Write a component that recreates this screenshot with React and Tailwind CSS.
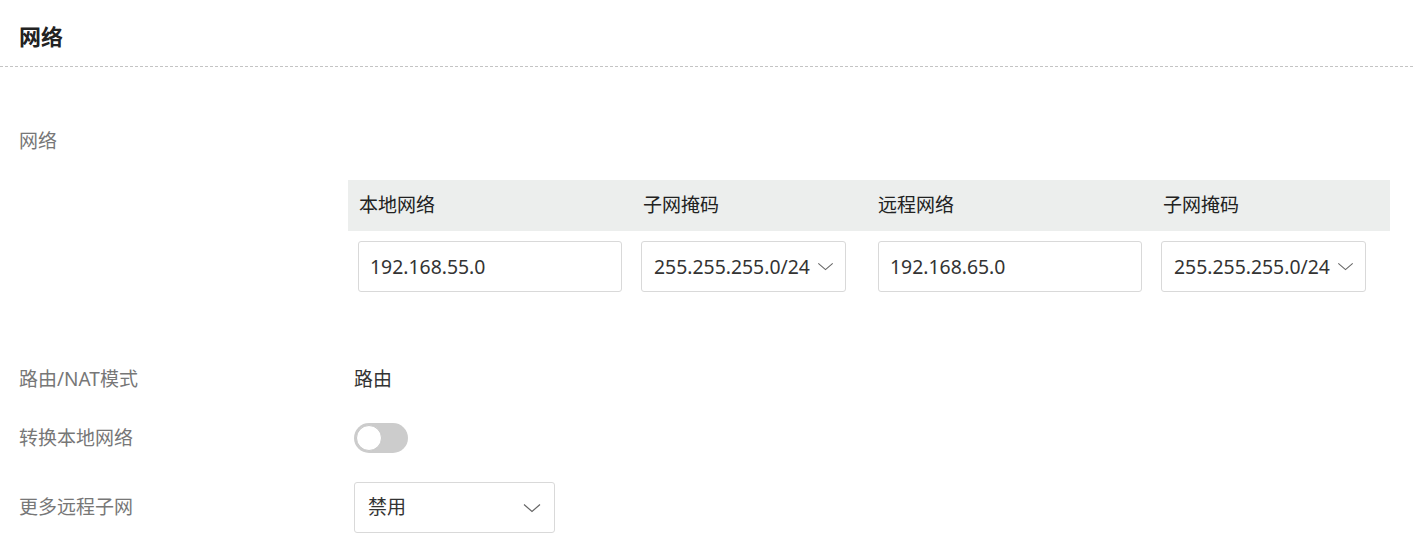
import { useState } from "react";

const font = { fontFamily: '"Noto Sans", "Noto Sans CJK SC", sans-serif' };

function Chevron({ className = "" }) {
  return (
    <svg viewBox="0 0 18 10" className={className} fill="none" stroke="#666" strokeWidth="1.2">
      <path d="M1 1.5 L9 8.5 L17 1.5" />
    </svg>
  );
}

function TextBox({ value, width }) {
  return (
    <div
      className={`flex h-[51px] items-center rounded-[3px] border border-[#d9d9d9] bg-white pl-[11px] text-[19.4px] text-[#333] ${width}`}
    >
      {value}
    </div>
  );
}

function MaskSelect({ value }) {
  return (
    <div className="flex h-[51px] w-[205px] items-center justify-between rounded-[3px] border border-[#d9d9d9] bg-white pl-[12px] pr-[11px] text-[19.4px] text-[#333]">
      <span>{value}</span>
      <Chevron className="h-[9px] w-[17px]" />
    </div>
  );
}

function SettingRow({ label, children, className }) {
  return (
    <div className={`grid grid-cols-[335px_1fr] items-center ${className}`}>
      <div className="text-[19px] text-[#777]">{label}</div>
      <div className="flex items-center">{children}</div>
    </div>
  );
}

export default function App() {
  const [natLocal, setNatLocal] = useState(false);

  return (
    <div className="h-[552px] w-[1413px] overflow-hidden bg-white" style={font}>
      <div className="h-[67px] border-b border-dashed border-[#c4c4c4] pl-[19px] pt-[21px]">
        <h1 className="text-[22px] font-bold leading-[30px] text-[#222]">网络</h1>
      </div>

      <div className="pl-[19px] pr-[23px]">
        <div className="mt-[60px] text-[19px] leading-[28px] text-[#777]">网络</div>

        <div className="ml-[329px] mt-[25px]">
          <div className="grid grid-cols-[283px_237px_283px_1fr] bg-[#eceeed] text-[19px] text-[#222]">
            <div className="flex h-[51px] items-center pl-[11px]">本地网络</div>
            <div className="flex h-[51px] items-center pl-[12px]">子网掩码</div>
            <div className="flex h-[51px] items-center pl-[10px]">远程网络</div>
            <div className="flex h-[51px] items-center pl-[12px]">子网掩码</div>
          </div>
          <div className="grid h-[73px] grid-cols-[283px_237px_283px_1fr] bg-white pt-[10px]">
            <div className="pl-[10px]">
              <TextBox value="192.168.55.0" width="w-[264px]" />
            </div>
            <div className="pl-[10px]">
              <MaskSelect value="255.255.255.0/24" />
            </div>
            <div className="pl-[10px]">
              <TextBox value="192.168.65.0" width="w-[264px]" />
            </div>
            <div className="pl-[10px]">
              <MaskSelect value="255.255.255.0/24" />
            </div>
          </div>
        </div>

        <SettingRow label="路由/NAT模式" className="mt-[51px] h-[48px]">
          <span className="text-[19px] text-[#333]">路由</span>
        </SettingRow>

        <SettingRow label="转换本地网络" className="mt-[11px] h-[48px]">
          <button
            type="button"
            onClick={() => setNatLocal(!natLocal)}
            className={`relative h-[30px] w-[54px] rounded-full transition ${
              natLocal ? "bg-[#3b82f6]" : "bg-[#cccccc]"
            }`}
          >
            <span
              className={`absolute top-[2px] h-[26px] w-[26px] rounded-full border border-[#c8c8c8] bg-white transition ${
                natLocal ? "left-[26px]" : "left-[2px]"
              }`}
            />
          </button>
        </SettingRow>

        <SettingRow label="更多远程子网" className="mt-[20px] h-[50px]">
          <div className="flex h-[51px] w-[201px] items-center justify-between rounded-[3px] border border-[#d9d9d9] bg-white pl-[13px] pr-[13px] text-[19px] text-[#333]">
            <span>禁用</span>
            <Chevron className="h-[10px] w-[18px]" />
          </div>
        </SettingRow>
      </div>
    </div>
  );
}
